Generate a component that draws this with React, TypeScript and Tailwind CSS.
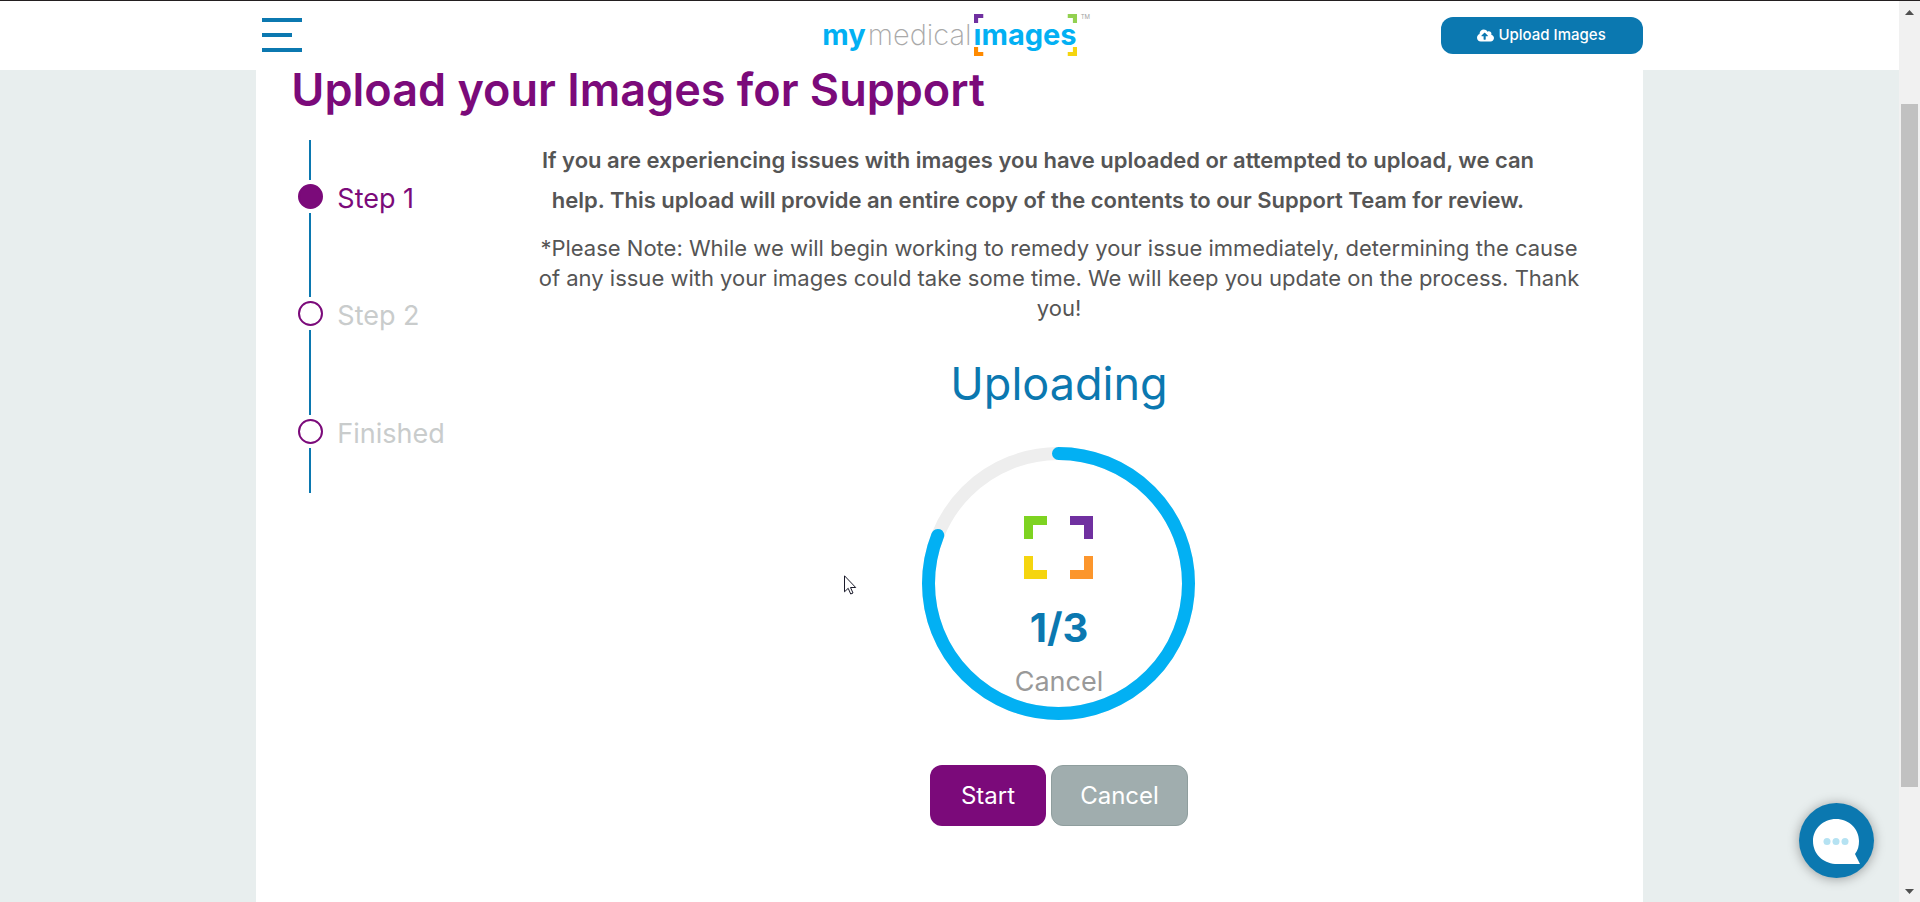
import React, { useState } from 'react';
import { FaCloudUploadAlt } from 'react-icons/fa';

const steps = [
  { label: 'Step 1', line: 'h-[84px]', active: true },
  { label: 'Step 2', line: 'h-[85px]', active: false },
  { label: 'Finished', line: 'h-[45px]', active: false },
];

const Logo = () => (
  <a
    href="#"
    className="relative flex items-start text-[29px] leading-8 text-[#02b0f3]"
  >
    <span className="font-bold">my</span>
    <span className="px-0.5 font-extralight text-[#a9a9a9]">medical</span>
    <span className="relative font-bold">
      images
      <svg
        className="absolute -top-[5px] left-0 h-[42px] w-full overflow-visible"
        viewBox="0 0 100 42"
        preserveAspectRatio="none"
      >
        <rect x="0" y="0" width="9" height="13" fill="#fff" />
        <path d="M0 0h9v4H4v5H0z" fill="#7030a0" />
        <path d="M91 0h9v9h-4V4h-5z" fill="#92d050" />
        <path d="M0 33h4v5h5v4H0z" fill="#ff8a00" />
        <path d="M96 33h4v9h-9v-4h5z" fill="#f5d50f" />
      </svg>
    </span>
    <span className="absolute -top-[5px] left-full ml-1 text-[6px] leading-[6px] text-[#a3a3a3]">
      TM
    </span>
  </a>
);

const Header = () => (
  <header className="h-[70px] border-t border-[#231f20] bg-white pb-0.5">
    <div className="mx-auto grid h-full w-[73%] grid-cols-3 items-center">
      <button
        aria-label="Menu"
        className="ml-1.5 flex w-10 flex-col gap-[11px] justify-self-start"
      >
        <span className="h-1 w-10 bg-[#0b78b0]" />
        <span className="h-1 w-[30px] bg-[#0b78b0]" />
        <span className="h-1 w-10 bg-[#0b78b0]" />
      </button>
      <div className="justify-self-center">
        <Logo />
      </div>
      <button className="mt-0.5 flex h-[37px] w-[202px] items-center justify-center gap-1 justify-self-end rounded-xl bg-[#0b78b0] text-[15px] font-medium text-white">
        <FaCloudUploadAlt size={17} />
        Upload Images
      </button>
    </div>
  </header>
);

const StepList = () => (
  <ol className="ml-[7px] flex w-[212px] shrink-0 flex-col">
    <li aria-hidden="true" className="ml-[11px] h-10 w-0.5 bg-[#0b78b0]" />
    {steps.map((step) => (
      <li key={step.label}>
        <div className="flex h-[33px] items-center gap-[14px]">
          <span
            className={`size-[25px] rounded-full border-2 border-[#7b0a7a] ${step.active ? 'bg-[#7b0a7a]' : 'bg-white'}`}
          />
          <span
            className={`pt-1 text-[27px] leading-[33px] ${step.active ? 'text-[#7b0a7a]' : 'text-[#c9cccc]'}`}
          >
            {step.label}
          </span>
        </div>
        <div className={`ml-[11px] w-0.5 bg-[#0b78b0] ${step.line}`} />
      </li>
    ))}
  </ol>
);

const ProgressRing = ({ value }: { value: number }) => {
  const length = 2 * Math.PI * 130;
  return (
    <div className="relative flex size-[273px] flex-col items-center pt-[69px]">
      <svg className="absolute inset-0" viewBox="0 0 273 273" fill="none">
        <circle cx="136.5" cy="136.5" r="130" stroke="#eee" strokeWidth="13" />
        <circle
          cx="136.5"
          cy="136.5"
          r="130"
          stroke="#02b0f3"
          strokeWidth="13"
          strokeLinecap="round"
          strokeDasharray={`${length * value} ${length}`}
          transform="rotate(-90 136.5 136.5)"
        />
      </svg>
      <svg width="69" height="63" viewBox="0 0 69 63">
        <path d="M0 0h23v9H9v14H0z" fill="#7ed321" />
        <path d="M46 0h23v23h-9V9H46z" fill="#7030a0" />
        <path d="M0 40h9v14h14v9H0z" fill="#f5d50f" />
        <path d="M60 40h9v23H46v-9h14z" fill="#fc962c" />
      </svg>
      <span className="mt-[29px] text-[40px] leading-10 font-bold text-[#0b78b0]">
        1/3
      </span>
      <button className="relative mt-[17px] text-[27px] leading-[33px] text-[#999]">
        Cancel
      </button>
    </div>
  );
};

const ChatButton = () => (
  <button
    aria-label="Chat"
    className="fixed right-[46px] bottom-6 size-[75px] rounded-full bg-[#0b78b0] shadow-[0_1px_12px_rgba(0,0,0,0.35)]"
  >
    <svg viewBox="0 0 75 75">
      <path
        d="M37 16c13 0 23 10 23 22 0 5-1 9-4 13l5 10H36C24 60 14 51 14 38c0-12 10-22 23-22z"
        fill="#fff"
      />
      <circle cx="28" cy="38.500" r="3.500" fill="#b5e2f2" />
      <circle cx="37" cy="38.500" r="3.500" fill="#b5e2f2" />
      <circle cx="46" cy="38.500" r="3.500" fill="#b5e2f2" />
    </svg>
  </button>
);

const ScrollTrack = () => (
  <div
    aria-hidden="true"
    className="sticky top-0 flex h-screen w-[21px] shrink-0 flex-col items-center border-t border-[#231f20] bg-[#f1f1f1]"
  >
    <svg className="mt-[9px] shrink-0" width="9" height="5" viewBox="0 0 9 5">
      <path d="M4.500 0L9 5H0z" fill="#505050" />
    </svg>
    <div className="mt-[89px] w-[17px] grow bg-[#c1c1c1]" />
    <svg
      className="mt-[102px] mb-2 shrink-0"
      width="9"
      height="5"
      viewBox="0 0 9 5"
    >
      <path d="M0 0h9L4.500 5z" fill="#505050" />
    </svg>
  </div>
);

const Pointer = () => (
  <svg
    className="pointer-events-none absolute top-32 -left-[78px]"
    width="13"
    height="20"
    viewBox="0 0 13 20"
  >
    <path
      d="M.5.8v16l3.700-3.500 2.500 5.700 2.300-1-2.500-5.500h5.200z"
      fill="#fff"
      stroke="#1a1a2a"
    />
  </svg>
);

const App: React.FC = () => {
  const [started, setStarted] = useState(true);

  return (
    <div className="flex min-h-screen bg-[#e8eeee] font-['Inter',sans-serif]">
      <div className="flex min-w-0 grow flex-col">
        <Header />
        <main className="mx-auto w-[73%] grow bg-white px-[35px] pb-[76px]">
          <h1 className="text-[45px] leading-10 font-semibold text-[#7b0a7a]">
            Upload your Images for Support
          </h1>

          <div className="mt-[30px] flex">
            <StepList />

            <div className="flex min-w-0 grow flex-col items-center px-[22px] text-[#555]">
              <p className="mr-[42px] text-center text-[22px] leading-10 font-semibold">
                If you are experiencing issues with images you have uploaded or
                attempted to upload, we can help. This upload will provide an
                entire copy of the contents to our Support Team for review.
              </p>
              <p className="mt-[13px] text-center text-[22px] leading-[30px]">
                *Please Note: While we will begin working to remedy your issue
                immediately, determining the cause of any issue with your images
                could take some time. We will keep you update on the process.
                Thank you!
              </p>

              <h2 className="mt-[35px] text-[45px] leading-[52px] text-[#0b78b0]">
                Uploading
              </h2>

              <div className="relative mt-[37px]">
                {started && <ProgressRing value={0.81} />}
                <Pointer />
              </div>

              <div className="mt-[45px] flex gap-[5px] text-2xl text-white">
                <button
                  onClick={() => setStarted(true)}
                  className="h-[61px] w-[116px] rounded-xl bg-[#7b0a7a]"
                >
                  Start
                </button>
                <button
                  onClick={() => setStarted(false)}
                  className="h-[61px] w-[137px] rounded-xl border border-[#8f9e9e] bg-[#a0adae]"
                >
                  Cancel
                </button>
              </div>
            </div>
          </div>
        </main>
      </div>
      <ScrollTrack />
      <ChatButton />
    </div>
  );
};

export default App;
